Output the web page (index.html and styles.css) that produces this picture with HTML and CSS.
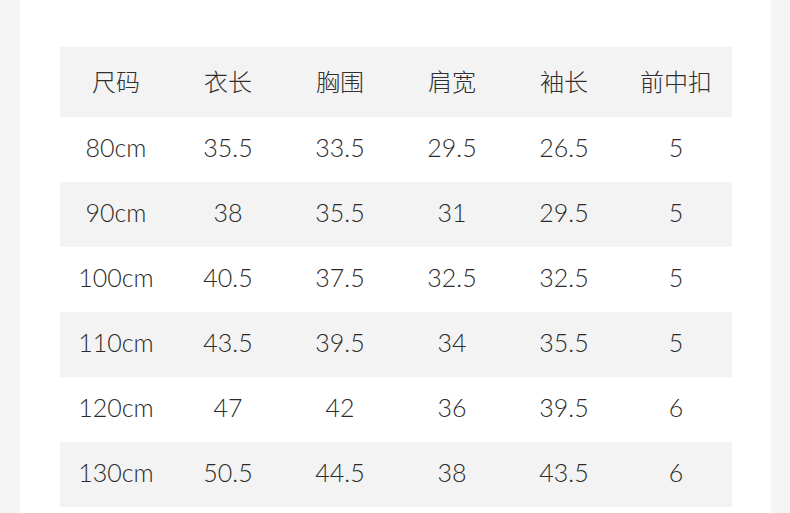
FILE: index.html
```html
<!DOCTYPE html>
<html lang="zh">
<head>
<meta charset="utf-8">
<link rel="stylesheet" href="styles.css">
</head>
<body>
<div class="page">
  <div class="sheet">
    <table class="size-table">
      <thead>
        <tr><th>尺码</th><th>衣长</th><th>胸围</th><th>肩宽</th><th>袖长</th><th>前中扣</th></tr>
      </thead>
      <tbody>
        <tr><td>80cm</td><td>35.5</td><td>33.5</td><td>29.5</td><td>26.5</td><td>5</td></tr>
        <tr class="alt"><td>90cm</td><td>38</td><td>35.5</td><td>31</td><td>29.5</td><td>5</td></tr>
        <tr><td>100cm</td><td>40.5</td><td>37.5</td><td>32.5</td><td>32.5</td><td>5</td></tr>
        <tr class="alt"><td>110cm</td><td>43.5</td><td>39.5</td><td>34</td><td>35.5</td><td>5</td></tr>
        <tr><td>120cm</td><td>47</td><td>42</td><td>36</td><td>39.5</td><td>6</td></tr>
        <tr class="alt"><td>130cm</td><td>50.5</td><td>44.5</td><td>38</td><td>43.5</td><td>6</td></tr>
      </tbody>
    </table>
  </div>
</div>
</body>
</html>
```
FILE: styles.css
```css
html, body {
  margin: 0;
  padding: 0;
  background: #f5f5f5;
}
.page {
  width: 790px;
  height: 513px;
  padding: 0 19px 0 20px;
  box-sizing: border-box;
  overflow: hidden;
}
.sheet {
  background: #ffffff;
  height: 100%;
  padding: 47px 0 0 40px;
  box-sizing: border-box;
}
.size-table {
  border-collapse: collapse;
  width: 672px;
  table-layout: fixed;
  font-family: "Lato", "Noto Sans CJK SC", sans-serif;
  font-weight: 300;
  font-size: 25px;
  color: #2a2a2a;
}
.size-table th,
.size-table td {
  text-align: center;
  padding: 0 0 5px 0;
  font-weight: 300;
}
.size-table thead tr {
  background: #f3f3f3;
  height: 70px;
}
.size-table th {
  font-family: "Noto Sans CJK SC", sans-serif;
  font-weight: 300;
  font-size: 24px;
  color: #2f2f2f;
  padding-bottom: 4px;
}
.size-table tbody tr {
  height: 65px;
}
.size-table tbody tr.alt {
  background: #f3f3f3;
}
```
